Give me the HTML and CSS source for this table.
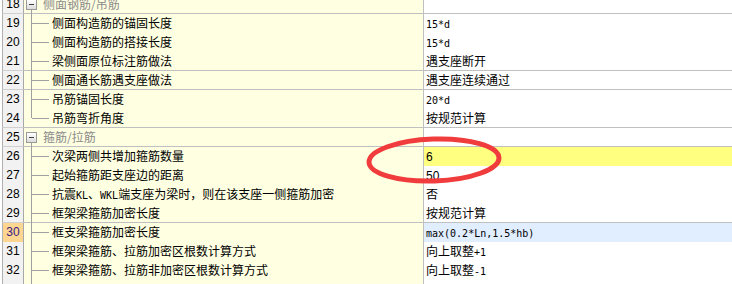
FILE: index.html
```html
<!DOCTYPE html>
<html>
<head>
<meta charset="utf-8">
<link rel="stylesheet" href="styles.css">
</head>
<body>
<div class="sheet">
  <div class="row group"><div class="num">18</div><div class="name"><span class="tree"><span class="box"></span></span><span class="glabel">侧面钢筋/吊筋</span></div><div class="val"></div></div>
  <div class="row"><div class="num">19</div><div class="name"><span class="tree mid"></span><span class="label">侧面构造筋的锚固长度</span></div><div class="val"><span class="mono">15*d</span></div></div>
  <div class="row"><div class="num">20</div><div class="name"><span class="tree mid"></span><span class="label">侧面构造筋的搭接长度</span></div><div class="val"><span class="mono">15*d</span></div></div>
  <div class="row"><div class="num">21</div><div class="name"><span class="tree mid"></span><span class="label">梁侧面原位标注筋做法</span></div><div class="val">遇支座断开</div></div>
  <div class="row"><div class="num">22</div><div class="name"><span class="tree mid"></span><span class="label">侧面通长筋遇支座做法</span></div><div class="val">遇支座连续通过</div></div>
  <div class="row"><div class="num">23</div><div class="name"><span class="tree mid"></span><span class="label">吊筋锚固长度</span></div><div class="val"><span class="mono">20*d</span></div></div>
  <div class="row"><div class="num">24</div><div class="name"><span class="tree last"></span><span class="label">吊筋弯折角度</span></div><div class="val">按规范计算</div></div>
  <div class="row group"><div class="num">25</div><div class="name"><span class="tree"><span class="box"></span></span><span class="glabel">箍筋/拉筋</span></div><div class="val"></div></div>
  <div class="row"><div class="num">26</div><div class="name"><span class="tree mid"></span><span class="label">次梁两侧共增加箍筋数量</span></div><div class="val hl-yellow"><span class="digit">6</span></div></div>
  <div class="row"><div class="num">27</div><div class="name"><span class="tree mid"></span><span class="label">起始箍筋距支座边的距离</span></div><div class="val"><span class="digit">50</span></div></div>
  <div class="row"><div class="num">28</div><div class="name"><span class="tree mid"></span><span class="label">抗震<span class="mono">KL</span>、<span class="mono">WKL</span>端支座为梁时，则在该支座一侧箍筋加密</span></div><div class="val">否</div></div>
  <div class="row"><div class="num">29</div><div class="name"><span class="tree mid"></span><span class="label">框架梁箍筋加密长度</span></div><div class="val">按规范计算</div></div>
  <div class="row"><div class="num sel">30</div><div class="name"><span class="tree mid"></span><span class="label">框支梁箍筋加密长度</span></div><div class="val hl-blue"><span class="mono">max(0.2*Ln,1.5*hb)</span></div></div>
  <div class="row"><div class="num">31</div><div class="name"><span class="tree mid"></span><span class="label">框架梁箍筋、拉筋加密区根数计算方式</span></div><div class="val">向上取整<span class="mono">+1</span></div></div>
  <div class="row"><div class="num">32</div><div class="name"><span class="tree mid"></span><span class="label">框架梁箍筋、拉筋非加密区根数计算方式</span></div><div class="val">向上取整<span class="mono">-1</span></div></div>
  <div class="row"><div class="num"></div><div class="name"><span class="tree mid"></span><span class="label"></span></div><div class="val"></div></div>
</div>
<svg class="mark" width="150" height="60" viewBox="0 0 150 60">
  <ellipse cx="74" cy="27" rx="65" ry="21" fill="none" stroke="#f03c3c" stroke-width="5" transform="rotate(-2 74 27)"/>
</svg>
</body>
</html>
```
FILE: styles.css
```css
html, body {
  margin: 0;
  padding: 0;
  background: #ffffff;
  overflow: hidden;
}
body {
  width: 732px;
  height: 284px;
  position: relative;
  font-family: "Noto Sans CJK SC", "Liberation Sans", sans-serif;
  font-size: 12px;
  color: #000;
}
.sheet {
  margin-top: -5px;
  padding-left: 2px;
}
.row {
  display: grid;
  grid-template-columns: 22px 400px 1fr;
  height: 19px;
}
.num {
  border-left: 1px solid #b0b0b0;
  border-right: 1px solid #a8a8a8;
  border-bottom: 1px solid #d0d0d0;
  background: #f2f2f2;
  font-family: "Liberation Sans", sans-serif;
  font-size: 12px;
  line-height: 18px;
  text-align: center;
  color: #000;
}
.num.sel {
  background: #ffd592;
  color: #3a1a80;
}
.name {
  background: #ffffe1;
  border-right: 1px solid #c0c0c0;
  border-bottom: 1px solid #c0c0c0;
  display: flex;
  align-items: stretch;
  line-height: 18px;
  white-space: nowrap;
  overflow: visible;
  position: relative;
}
.val {
  background: #ffffff;
  border-bottom: 1px solid #c0c0c0;
  line-height: 18px;
  padding-left: 2px;
  white-space: nowrap;
}
.hl-yellow { background: #ffff80; }
.hl-blue { background: #e0eeff; }
.tree {
  width: 28px;
  flex: none;
  position: relative;
}
.tree.mid::before {
  content: "";
  position: absolute;
  left: 7px;
  top: 0;
  bottom: -1px;
  border-left: 1px solid #a0a0a0;
}
.tree.last::before {
  content: "";
  position: absolute;
  left: 7px;
  top: 0;
  height: 9px;
  border-left: 1px solid #a0a0a0;
}
.tree.mid::after, .tree.last::after {
  content: "";
  position: absolute;
  left: 8px;
  top: 9px;
  width: 17px;
  border-top: 1px solid #a0a0a0;
}
.group .tree {
  width: 19px;
}
.group .tree::before {
  content: "";
  position: absolute;
  left: 7px;
  top: 14px;
  bottom: -1px;
  border-left: 1px solid #a0a0a0;
}
.box {
  position: absolute;
  left: 2px;
  top: 4px;
  width: 9px;
  height: 9px;
  border: 1px solid #9a9a9a;
  background: linear-gradient(#ffffff, #dcdcdc);
}
.box::after {
  content: "";
  position: absolute;
  left: 2px;
  top: 4px;
  width: 5px;
  height: 1px;
  background: #404040;
}
.glabel {
  color: #8a8a8a;
}
.label {
  color: #000;
}
.mono {
  font-family: "DejaVu Sans Mono", "Liberation Mono", monospace;
  font-size: 10px;
}
.digit {
  font-family: "Liberation Sans", sans-serif;
  font-size: 12px;
}
.mark {
  position: absolute;
  left: 360px;
  top: 133px;
}
```
